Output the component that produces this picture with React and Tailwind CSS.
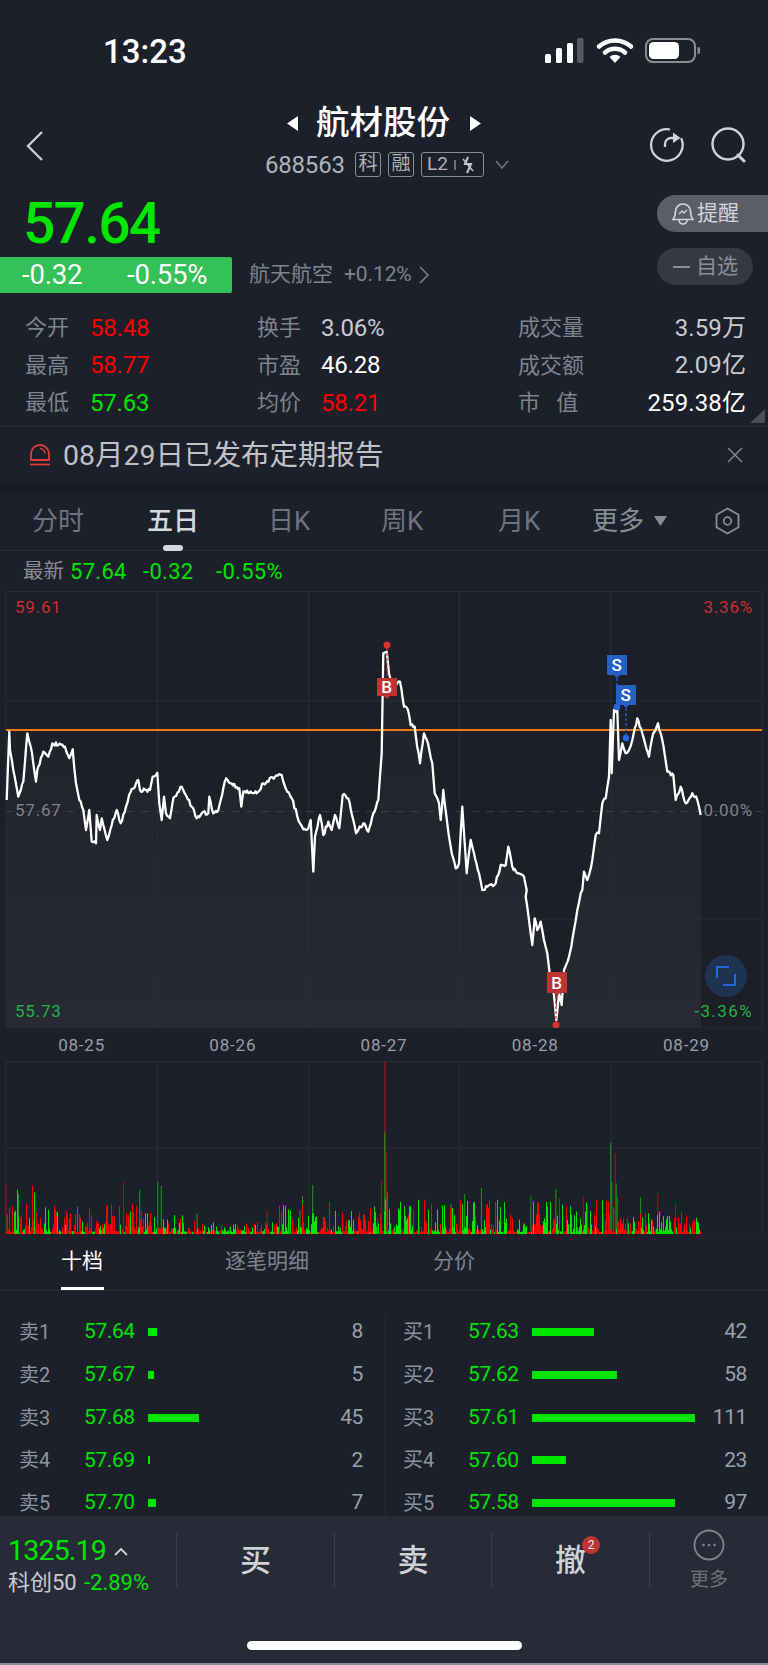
import React from 'react';

// price line traced from the reference, page coordinates
const a = [[20,630],[28,425],[30,480],[40,540],[45,565],[55,620],[70,575],[82,430],[92,470],[100,520],[108,575],[112,540],[130,485],[145,500],[157,460],[175,465],[195,470],[208,505],[218,478],[228,580],[238,630],[250,660],[258,720],[268,660],[275,755],[288,760],[290,675],[300,720],[305,685],[322,750],[335,705],[350,660],[362,700],[378,650],[392,605],[415,570],[420,600],[450,600],[458,560],[472,548],[478,640],[485,690],[492,620],[498,670],[510,685],[520,625],[545,590],[560,620],[575,650],[590,685],[610,665],[625,670],[628,620],[640,670],[655,660],[678,565],[695,580],[718,595],[724,650],[730,605],[770,610],[790,580],[825,560],[845,555],[862,605],[875,625],[900,700],[910,718],[925,715],[932,690],[940,845],[945,740],[960,675],[970,735],[985,695],[995,720],[1005,675],[1018,715],[1028,615],[1045,625],[1060,690],[1068,730],[1090,700],[1105,725],[1120,670],[1135,630],[1145,490],[1150,190]].map(([x, y]) => [x / 3, 590 + y / 3]);
const b = [[8,185],[15,250],[25,290],[48,275],[60,350],[72,360],[80,405],[92,410],[95,435],[108,520],[120,430],[132,460],[145,520],[152,610],[165,640],[170,690],[178,600],[190,700],[200,770],[215,835],[225,820],[235,650],[248,850],[260,750],[270,790],[285,850],[295,900],[310,890],[335,880],[350,825],[365,825],[373,770],[385,830],[400,850],[420,860],[428,900]].map(([x, y]) => [384 + x / 3, 590 + y / 3]);
const c = [[425,50],[435,120],[445,195],[452,115],[460,150],[470,125],[480,180],[490,220],[497,280],[510,345],[517,420],[525,340],[533,375],[540,270],[555,230],[562,200],[570,150],[580,90],[590,40]].map(([x, y]) => [384 + x / 3, 880 + y / 3]);
const d = [[595,900],[600,845],[610,870],[625,810],[635,735],[645,730],[655,640],[665,625],[675,560],[680,390],[683,550],[690,360],[700,360],[705,510],[715,460],[725,490],[735,480],[745,450],[760,385],[775,430],[795,500],[808,430],[822,400],[835,450],[850,545],[868,555],[875,630],[890,590],[905,640],[925,610],[940,630],[950,675]].map(([x, y]) => [384 + x / 3, 590 + y / 3]);

function seeded(s) {
  return () => {
    s = (s * 1664525 + 1013904223) % 4294967296;
    return s / 4294967296;
  };
}

function buildLine() {
  const rnd = seeded(77);
  const src = [...a, ...b, ...c, ...d];
  const out = [];
  for (let i = 0; i < src.length - 1; i++) {
    const [x0, y0] = src[i];
    const [x1, y1] = src[i + 1];
    const n = Math.max(1, Math.floor((x1 - x0) / 1.2));
    for (let k = 0; k < n; k++) {
      const t = k / n;
      const j = k === 0 ? 0 : (rnd() - 0.5) * 4;
      out.push([x0 + (x1 - x0) * t, y0 + (y1 - y0) * t + j]);
    }
  }
  out.push(src[src.length - 1]);
  return out;
}
const linePts = buildLine();
const lineStr = linePts.map((p) => p[0].toFixed(1) + ',' + p[1].toFixed(1)).join(' ');
const areaStr = lineStr + ' 701,1028 6.7,1028';

function envelope(x) {
  if (x < 40) return 34;
  if (x < 150) return 20;
  if (x < 196) return 14;
  if (x < 275) return 7;
  if (x < 330) return 22;
  if (x < 370) return 15;
  if (x < 600) return 24;
  if (x < 640) return 30;
  return 16;
}

function buildVolume() {
  const rnd = seeded(2024);
  let red = '';
  let green = '';
  let isRed = true;
  for (let x = 6.5; x < 701; x += 1) {
    const r = rnd();
    const h = 2 + Math.pow(r, 2.4) * envelope(x) * 1.4;
    const seg = 'M' + x + ' ' + (1234 - h).toFixed(1) + 'V1234';
    if (rnd() < 0.3) isRed = !isRed;
    if (isRed) red += seg;
    else green += seg;
  }
  return { red, green };
}
const vol = buildVolume();
const redSpikes = [[12,400],[252,398],[545,482],[778,395],[788,305],[940,450],[1190,440],[1255,310],[1342,430],[1378,460]];
const greenSpikes = [[38,432],[115,488],[158,470],[285,420],[322,395],[329,407],[402,490],[612,480],[617,438],[638,405],[785,248],[790,425],[920,462],[948,432],[982,415],[1083,440],[1134,418],[1246,278],[1248,395],[1257,400],[1307,442]];
const spikePath = (list) => list.map(([x, y]) => 'M' + (x / 2.04).toFixed(1) + ' ' + (1050 + y / 3).toFixed(1) + 'V1234').join('');

const asks = [['卖1','57.64',8],['卖2','57.67',5],['卖3','57.68',45],['卖4','57.69',2],['卖5','57.70',7]];
const bids = [['买1','57.63',42],['买2','57.62',58],['买3','57.61',111],['买4','57.60',23],['买5','57.58',97]];

function DepthRow({ row, scale }) {
  return (
    <div className="flex h-[32px] shrink-0 items-center">
      <span className="w-[65px] text-[20px] text-[#8f939c]">{row[0]}</span>
      <span className="w-[64px] text-[21px] tracking-[-0.4px] text-[#00e600]">{row[1]}</span>
      <span className="h-[8px] bg-[#00e600]" style={{ width: row[2] * scale }} />
      <span className="ml-auto text-[21px] tracking-[-0.4px] text-[#9aa0ab]">{row[2]}</span>
    </div>
  );
}

function StatRow({ l1, v1, c1, l2, v2, c2, l3, v3, c3 }) {
  return (
    <div className="flex h-[37.5px] items-center text-[22px]">
      <div className="flex w-[257px] items-center pl-[25px]">
        <span className="w-[65px] text-[#7f838c]">{l1}</span>
        <span className={'text-[24px] tracking-[-0.2px] ' + c1}>{v1}</span>
      </div>
      <div className="flex w-[261px] items-center">
        <span className="w-[64px] text-[#7f838c]">{l2}</span>
        <span className={'text-[24px] tracking-[-0.2px] ' + c2}>{v2}</span>
      </div>
      <div className="flex w-[228px] items-center justify-between">
        <span className="w-[68px] whitespace-pre text-[#7f838c]">{l3}</span>
        <span className={'text-[24px] tracking-[0.1px] ' + c3}>{v3}</span>
      </div>
    </div>
  );
}

function Tag({ x, y, w, h, color, label }) {
  return (
    <g>
      <path d={`M${x} ${y}h${w}v${h}h-${w / 2 - 3}l-3 3l-3 -3h-${w / 2 - 3}z`} fill={color} />
      <text x={x + w / 2} y={y + h / 2 + 6} textAnchor="middle" fontSize="17" fontWeight="500" fill="#fff">{label}</text>
    </g>
  );
}

function Grid({ top, bottom, mids }) {
  return (
    <g stroke="#2a2d38" strokeWidth="1" fill="none">
      <rect x="6" y={top} width="756" height={bottom - top} />
      {[157.5, 308.5, 459.5, 611].map((x) => <path key={x} d={`M${x} ${top}V${bottom}`} />)}
      {mids.map((y) => <path key={y} d={`M6 ${y}H762`} />)}
    </g>
  );
}

export default function App() {
  return (
    <div className="relative h-[1665px] w-[768px] overflow-hidden bg-[#1c202b] [font-family:'Roboto','Noto_Sans_CJK_SC',sans-serif] text-white">
      {/* status bar */}
      <div className="flex h-[100px] items-start pl-[103px] pr-[68px] pt-[34px]">
        <span className="text-[33px] leading-[36px] font-medium">13:23</span>
        <svg className="ml-auto mt-[3px]" width="155" height="28" viewBox="0 0 155 28" fill="none">
          <rect x="0" y="17" width="6" height="9" rx="1.5" fill="#fff" />
          <rect x="11" y="11" width="6" height="15" rx="1.5" fill="#fff" />
          <rect x="22" y="6" width="6" height="20" rx="1.5" fill="#fff" />
          <rect x="32" y="1" width="6.5" height="25" rx="2" fill="#565a64" />
          <path d="M54 9.5a24 24 0 0 1 32 0" stroke="#fff" strokeWidth="4.5" strokeLinecap="round" />
          <path d="M60 15.5a15 15 0 0 1 20 0" stroke="#fff" strokeWidth="4.5" strokeLinecap="round" />
          <path d="M70 26l-5.5-6a8 8 0 0 1 11 0z" fill="#fff" />
          <rect x="101" y="2" width="49" height="23" rx="7" stroke="#8a8d94" strokeWidth="2" />
          <rect x="104" y="5" width="30" height="17" rx="4.5" fill="#fff" />
          <path d="M152.5 10v7a3.5 3.5 0 0 0 0-7z" fill="#8a8d94" />
        </svg>
      </div>

      {/* header */}
      <div className="flex h-[85px] items-start">
        <svg className="ml-[25px] mt-[30px]" width="20" height="32" viewBox="0 0 20 32" fill="none">
          <path d="M17 2L3 16l14 14" stroke="#c9cbd0" strokeWidth="2.4" />
        </svg>
        <div className="ml-[242px] flex w-[270px] flex-col">
          <div className="flex h-[46px] items-center">
            <svg width="11" height="15" viewBox="0 0 11 15"><path d="M11 0v15L0 7.5z" fill="#fff" /></svg>
            <span className="ml-[18px] w-[135px] text-[33.5px] leading-[40px] font-medium whitespace-nowrap">航材股份</span>
            <svg className="ml-[19px]" width="11" height="15" viewBox="0 0 11 15"><path d="M0 0v15l11-7.5z" fill="#fff" /></svg>
          </div>
          <div className="-ml-[22px] mt-[6px] flex h-[25px] items-center">
            <span className="w-[90px] text-[24px] tracking-[-0.2px] text-[#b0b3ba]">688563</span>
            <span className="flex h-[25px] w-[26px] items-center justify-center rounded-[3px] border border-[#8a8d94] text-[19px] text-[#b0b3ba]">科</span>
            <span className="ml-[7px] flex h-[25px] w-[26px] items-center justify-center rounded-[3px] border border-[#8a8d94] text-[19px] text-[#b0b3ba]">融</span>
            <span className="ml-[7px] flex h-[25px] w-[63px] items-center rounded-[3px] border border-[#8a8d94] pl-[5px] text-[19px] text-[#b0b3ba]">
              L2
              <svg className="ml-[6px]" width="24" height="18" viewBox="0 0 24 18" fill="none">
                <path d="M1 4v10" stroke="#8a8d94" strokeWidth="1.5" />
                <path d="M14 1l-3 7h6l-4 9" stroke="#c3c5ca" strokeWidth="2" />
                <path d="M9 3l10 12" stroke="#c3c5ca" strokeWidth="1.5" />
              </svg>
            </span>
            <svg className="ml-[11px]" width="14" height="10" viewBox="0 0 14 10" fill="none">
              <path d="M1 1l6 7 6-7" stroke="#6f737c" strokeWidth="1.6" />
            </svg>
          </div>
        </div>
        <svg className="ml-[92px] mt-[27px]" width="100" height="36" viewBox="0 0 100 36" fill="none">
          <path d="M20 2.3A15.8 15.8 0 1 0 32.5 12" stroke="#d0d2d6" strokeWidth="2.3" strokeLinecap="round" />
          <path d="M16 20v-3a6 6 0 0 1 6-6h6" stroke="#d0d2d6" strokeWidth="2.3" />
          <path d="M24 5.5l7.5 5.5-7.5 5z" fill="#d0d2d6" />
          <circle cx="79" cy="17" r="15.5" stroke="#d0d2d6" strokeWidth="2.4" />
          <path d="M89 28l6 6" stroke="#d0d2d6" strokeWidth="3" strokeLinecap="round" />
        </svg>
      </div>

      {/* quote */}
      <div className="flex h-[115px]">
        <div className="flex w-[657px] flex-col">
          <span className="ml-[23px] mt-[8px] mb-[3px] h-[61px] text-[57px] leading-[61px] font-medium tracking-[-1.8px] text-[#00e600]">57.64</span>
          <div className="flex h-[36px] items-center">
            <div className="flex h-[36px] w-[232px] items-center rounded-r-[2px] bg-[#33c158] pl-[22px] text-[27.5px] tracking-[-0.2px]">
              <span className="w-[105px]">-0.32</span>
              <span>-0.55%</span>
            </div>
            <span className="ml-[17px] text-[21px] text-[#7f838c]">航天航空</span>
            <span className="ml-[11px] text-[21px] tracking-[-0.1px] text-[#7f838c]">+0.12%</span>
            <svg className="ml-[7px]" width="10" height="18" viewBox="0 0 10 18" fill="none">
              <path d="M1 1l8 8-8 8" stroke="#7f838c" strokeWidth="1.5" />
            </svg>
          </div>
        </div>
        <div className="flex flex-1 flex-col">
          <div className="mt-[10px] flex h-[37px] items-center rounded-l-[19px] bg-[#5a5e69] pl-[15px] text-[21px] text-[#d3d5d9]">
            <svg width="22" height="24" viewBox="0 0 22 24" fill="none">
              <path d="M11 2a7.5 7.5 0 0 0-7.5 7.5c0 4-1 6-2.5 8h20c-1.5-2-2.5-4-2.5-8A7.5 7.5 0 0 0 11 2z" stroke="#d3d5d9" strokeWidth="1.7" />
              <path d="M7 18a4 4 0 0 0 8 0" stroke="#d3d5d9" strokeWidth="1.7" />
              <path d="M7 12l3-3 2 2 3-3" stroke="#d3d5d9" strokeWidth="1.3" />
            </svg>
            <span className="ml-[3px]">提醒</span>
          </div>
          <div className="mt-[16px] flex h-[37px] w-[96px] items-center rounded-[19px] bg-[#353943] pl-[16px] text-[21px] text-[#8b8f98]">
            <span className="h-[2px] w-[17px] bg-[#8b8f98]" />
            <span className="ml-[6px]">自选</span>
          </div>
        </div>
      </div>

      {/* stats */}
      <div className="relative h-[127px] border-b border-[#2a2d38] pt-[9px]">
        <StatRow l1="今开" v1="58.48" c1="text-[#ff0000]" l2="换手" v2="3.06%" c2="text-[#c9cbd0]" l3="成交量" v3="3.59万" c3="text-[#c9cbd0]" />
        <StatRow l1="最高" v1="58.77" c1="text-[#ff0000]" l2="市盈" v2="46.28" c2="text-white" l3="成交额" v3="2.09亿" c3="text-[#c9cbd0]" />
        <StatRow l1="最低" v1="57.63" c1="text-[#00e600]" l2="均价" v2="58.21" c2="text-[#ff0000]" l3={'市   值'} v3="259.38亿" c3="text-white" />
        <svg className="absolute right-[3px] bottom-[3px]" width="15" height="14" viewBox="0 0 15 14"><path d="M15 0v14H0z" fill="#4b4f59" /></svg>
      </div>

      {/* notice */}
      <div className="flex h-[56px] items-center pl-[29px] pr-[25px]">
        <svg width="22" height="24" viewBox="0 0 22 24" fill="none">
          <path d="M2 17V11a9 9 0 0 1 18 0v6z" stroke="#e23b3b" strokeWidth="1.8" />
          <path d="M11 5.5a5 5 0 0 1 5 5" stroke="#e23b3b" strokeWidth="1.4" />
          <path d="M1 21.5h20" stroke="#e23b3b" strokeWidth="1.8" />
        </svg>
        <span className="ml-[12px] mt-[3px] text-[28.5px] text-[#c0c2c8]">08月29日已发布定期报告</span>
        <svg className="ml-auto" width="16" height="16" viewBox="0 0 16 16" fill="none">
          <path d="M1 1l14 14M15 1L1 15" stroke="#8a8d94" strokeWidth="1.4" />
        </svg>
      </div>
      <div className="h-[9px] bg-[#181b24]" />

      {/* period tabs */}
      <div className="relative flex h-[59px] items-center border-b border-[#2a2d38] text-[26px] text-[#6f737c]">
        <span className="ml-[32px] w-[115px]">分时</span>
        <span className="w-[121px] font-medium text-[#d6d8dc]">五日</span>
        <span className="w-[113px]">日K</span>
        <span className="w-[117px]">周K</span>
        <span className="w-[94px]">月K</span>
        <span className="text-[#8a8d94]">更多</span>
        <svg className="ml-[10px]" width="13" height="10" viewBox="0 0 13 10"><path d="M0 0h13L6.5 10z" fill="#8a8d94" /></svg>
        <svg className="ml-[47px]" width="27" height="28" viewBox="0 0 27 28" fill="none">
          <path d="M13.5 1.5l11 6.2v12.6l-11 6.2-11-6.2V7.7z" stroke="#8a8d94" strokeWidth="1.8" />
          <circle cx="13.5" cy="14" r="3.8" stroke="#8a8d94" strokeWidth="1.8" />
        </svg>
        <span className="absolute bottom-[-1px] left-[163px] h-[6px] w-[20px] rounded-[3px] bg-[#d6d8dc]" />
      </div>

      {/* latest row */}
      <div className="flex h-[40px] items-center pl-[23px] text-[22px] tracking-[0.3px] text-[#00e600]">
        <span className="w-[47px] text-[20.5px] tracking-normal text-[#8a8d94]">最新</span>
        <span className="w-[73px]">57.64</span>
        <span className="w-[73px]">-0.32</span>
        <span>-0.55%</span>
      </div>

      {/* price chart */}
      <div className="relative h-[437px] text-[17px] tracking-[0.8px]">
        <svg className="block" width="768" height="437" viewBox="0 591 768 437" fill="none">
          <defs>
            <linearGradient id="area" x1="0" y1="0" x2="0" y2="1">
              <stop offset="0" stopColor="#1f212b" />
              <stop offset="1" stopColor="#272933" />
            </linearGradient>
          </defs>
          <rect x="6" y="591" width="756" height="437" fill="#1c1e28" />
          <polygon points={areaStr} fill="url(#area)" />
          <Grid top={591.5} bottom={1028} mids={[701, 919]} />
          <path d="M6 811.5H762" stroke="#3a3d48" strokeDasharray="8 7" />
          <path d="M6 730H762" stroke="#ee7a14" strokeWidth="2" />
          <polyline points={lineStr} stroke="#fff" strokeWidth="2.3" strokeLinejoin="round" />
          <g strokeDasharray="3 2" strokeWidth="1.2">
            <path d="M387 648V680" stroke="#d33" />
            <path d="M556 996V1024" stroke="#d33" />
            <path d="M617 678V706" stroke="#2468e0" />
            <path d="M626 708V737" stroke="#2468e0" />
          </g>
          <circle cx="387" cy="645" r="3.5" fill="#d93030" />
          <circle cx="556" cy="1025" r="3.5" fill="#d93030" />
          <circle cx="617" cy="707" r="3.3" fill="#2468e0" />
          <circle cx="626" cy="738" r="3.3" fill="#2468e0" />
          <Tag x={377} y={678} w={20} h={18} color="#bd3433" label="B" />
          <Tag x={547} y={972} w={20} h={21} color="#bd3433" label="B" />
          <Tag x={607} y={655} w={20} h={20} color="#2461c4" label="S" />
          <Tag x={616} y={685} w={20} h={20} color="#2461c4" label="S" />
        </svg>
        <span className="absolute left-[15px] top-[4px] text-[#c9302c]">59.61</span>
        <span className="absolute right-[15px] top-[4px] text-[#c9302c]">3.36%</span>
        <span className="absolute left-[15px] top-[207px] text-[#7f838c]">57.67</span>
        <span className="absolute right-[15px] top-[207px] text-[#7f838c]">0.00%</span>
        <span className="absolute left-[15px] top-[408px] text-[#22b24c]">55.73</span>
        <span className="absolute right-[15px] top-[408px] tracking-[1.4px] text-[#22b24c]">-3.36%</span>
        <div className="absolute left-[705px] top-[364px] flex h-[42px] w-[42px] items-center justify-center rounded-full bg-[#1e3352]">
          <svg width="20" height="20" viewBox="0 0 20 20" fill="none">
            <path d="M1 12V1h12M19 8v11H7" stroke="#2468e0" strokeWidth="2" />
          </svg>
        </div>
      </div>

      {/* dates */}
      <div className="grid h-[33px] grid-cols-5 items-center px-[6px] pt-[2px] text-center text-[17px] tracking-[0.8px] text-[#9a9da5]">
        <span>08-25</span>
        <span>08-26</span>
        <span>08-27</span>
        <span>08-28</span>
        <span>08-29</span>
      </div>

      {/* volume */}
      <svg className="block" width="768" height="173" viewBox="0 1061 768 173" fill="none">
        <Grid top={1061.5} bottom={1234} mids={[1148]} />
        <path d={spikePath(redSpikes)} stroke="#b01010" strokeWidth="1" />
        <path d="M385 1062V1234" stroke="#c01010" strokeWidth="1" />
        <path d={spikePath(greenSpikes)} stroke="#14a014" strokeWidth="1" />
        <path d={vol.red} stroke="#ff0000" strokeWidth="1" />
        <path d={vol.green} stroke="#00e600" strokeWidth="1" />
      </svg>

      {/* depth tabs */}
      <div className="relative flex h-[57px] items-end border-b border-[#2a2d38] pb-[13px] text-[21px] text-[#7f838c]">
        <span className="ml-[61px] w-[164px] text-white">十档</span>
        <span className="w-[208px]">逐笔明细</span>
        <span>分价</span>
        <span className="absolute bottom-0 left-[61px] h-[3px] w-[43px] bg-white" />
      </div>

      {/* depth */}
      <div className="flex h-[225px] overflow-hidden">
        <div className="mt-[25px] flex w-[385px] flex-col gap-[10.75px] pl-[19px] pr-[22px]">
          {asks.map((r) => <DepthRow key={r[0]} row={r} scale={1.13} />)}
        </div>
        <div className="mt-[25px] flex flex-1 flex-col gap-[10.75px] border-l border-[#2a2d38] pl-[17px] pr-[21px]">
          {bids.map((r) => <DepthRow key={r[0]} row={r} scale={1.47} />)}
        </div>
      </div>

      {/* bottom bar */}
      <div className="h-[149px] bg-[#272b38]">
        <div className="flex h-[71px] items-center pt-[17px]">
          <div className="mt-[12px] flex w-[176px] flex-col pl-[8px]">
            <div className="flex items-center">
              <span className="text-[28.5px] leading-[34px] tracking-[-0.8px] text-[#00e600]">1325.19</span>
              <svg className="ml-[8px]" width="14" height="9" viewBox="0 0 14 9" fill="none">
                <path d="M1 8l6-6 6 6" stroke="#d0d2d6" strokeWidth="1.8" />
              </svg>
            </div>
            <div className="flex items-center text-[22px] leading-[30px]">
              <span className="w-[76px] text-[#c9cbd0]">科创50</span>
              <span className="text-[#00e600]">-2.89%</span>
            </div>
          </div>
          <div className="flex h-[54px] flex-1 items-center justify-center border-l border-[#3a3e4b] pt-[3px] text-[31px] font-medium text-[#d0d2d6]">买</div>
          <div className="flex h-[54px] w-[157px] items-center justify-center border-l border-[#3a3e4b] pt-[3px] text-[31px] font-medium text-[#d0d2d6]">卖</div>
          <div className="flex h-[54px] w-[158px] items-center justify-center border-l border-[#3a3e4b] pt-[3px] text-[31px] font-medium text-[#d0d2d6]">
            <span className="relative">
              撤
              <span className="absolute -right-[14px] -top-[2px] flex h-[18px] w-[18px] items-center justify-center rounded-full bg-[#bd3433] text-[12px] font-normal text-[#eee]">2</span>
            </span>
          </div>
          <div className="flex h-[54px] w-[119px] flex-col items-center border-l border-[#3a3e4b]">
            <svg className="-mt-[4px] shrink-0" width="32" height="32" viewBox="0 0 32 32" fill="none">
              <circle cx="16" cy="16" r="14.5" stroke="#7f838c" strokeWidth="1.8" />
              <circle cx="10.5" cy="16" r="1.3" fill="#7f838c" />
              <circle cx="16" cy="16" r="1.3" fill="#7f838c" />
              <circle cx="21.5" cy="16" r="1.3" fill="#7f838c" />
            </svg>
            <span className="mt-[6px] text-[19px] leading-[26px] text-[#6f737c]">更多</span>
          </div>
        </div>
        <div className="ml-[247px] mt-[54px] h-[9px] w-[275px] rounded-full bg-white" />
        <div className="mt-[13px] h-[2px] bg-[#8a8d94]" />
      </div>
    </div>
  );
}
